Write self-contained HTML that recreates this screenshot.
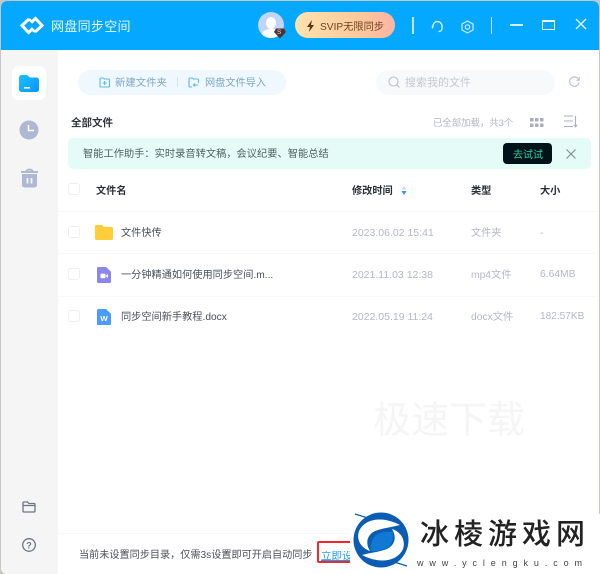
<!DOCTYPE html>
<html lang="zh">
<head>
<meta charset="utf-8">
<style>
html,body{margin:0;padding:0;width:600px;height:574px;overflow:hidden;background:#c9c7c3}
*{box-sizing:border-box}
body{font-family:"Liberation Sans","Noto Sans CJK SC",sans-serif;position:relative}
.a{position:absolute;white-space:nowrap;line-height:1}
svg{position:absolute;overflow:visible}
.cb{position:absolute;width:12px;height:12px;border:1px solid #eceef2;border-radius:3px;background:#fff;left:68px}
.row{position:absolute;left:58px;width:540px;height:1px;background:#f8f8f9}
.g{color:#b4b8c2;font-size:10.5px}
.n{color:#4a4f5a;font-size:10.2px}
.h{color:#2b2f36;font-size:10.2px;font-weight:700}
</style>
</head>
<body>
<div class="a" style="left:1px;top:1px;width:598px;height:573px;background:#fff;border-radius:6px 6px 0 6px;overflow:hidden">
  <div class="a" style="left:0;top:0;width:598px;height:49px;background:#05a8ff"></div>
  <div class="a" style="left:0;top:49px;width:57px;height:524px;background:#f5f5f5"></div>
</div>

<!-- logo -->
<svg style="left:20px;top:16px" width="24" height="20" viewBox="0 0 24 20" fill="none" stroke="#fff" stroke-width="3">
  <path d="M12 13.500L8.500 16.500L2 9.500L9 3"/>
  <path d="M12 5.500L15.500 2.500L22 9.500L15 16"/>
  <path d="M9 3L13 7M15 16L11 12" stroke-width="2.500"/>
</svg>
<div class="a" style="left:51px;top:20px;font-size:13px;color:#e9f7ff;letter-spacing:.3px">网盘同步空间</div>

<!-- avatar -->
<div class="a" style="left:258px;top:12px;width:26px;height:26px;border-radius:50%;background:#c3d4fb;overflow:hidden">
  <div class="a" style="left:8px;top:5px;width:10px;height:12px;border-radius:50%;background:#fff"></div>
  <div class="a" style="left:3px;top:17px;width:20px;height:14px;border-radius:50%;background:#fff"></div>
</div>
<svg style="left:274px;top:28px" width="12" height="11" viewBox="0 0 12 11"><path d="M2 0.500H10L12 4L6 10.500L0 4Z" fill="#4d3230"/></svg>
<div class="a" style="left:277px;top:30px;font-size:6.500px;color:#f3dcc8">S</div>

<!-- SVIP -->
<div class="a" style="left:295px;top:12px;width:100px;height:26px;border-radius:13px;background:linear-gradient(90deg,#fde3ae,#fdc89c 65%,#fdb4a4)"></div>
<svg style="left:306px;top:20px" width="9" height="12" viewBox="0 0 9 12"><path d="M6 0L1 7H4L3 12L8 5H5Z" fill="#5a3514"/></svg>
<div class="a" style="left:320px;top:23px;font-size:10.200px;color:#6b4520">SVIP无限同步</div>

<!-- header right -->
<div class="a" style="left:412px;top:17px;width:2px;height:17px;background:#bfe7ff"></div>
<svg style="left:431px;top:20px" width="13" height="13" viewBox="0 0 13 13" fill="none" stroke="#cdeeff" stroke-width="1.400"><path d="M2 7V6a4.500 4.500 0 0 1 9 0v1"/><path d="M1.500 5.500v3M11 5.500v3"/><path d="M11 8.500c0 2-1.500 3-3.500 3"/></svg>
<svg style="left:461px;top:20px" width="13" height="14" viewBox="0 0 13 14" fill="none" stroke="#cdeeff" stroke-width="1.200"><path d="M6.500 1L12 4V10L6.500 13L1 10V4Z"/><circle cx="6.500" cy="7" r="2.200"/></svg>
<div class="a" style="left:491px;top:17px;width:1px;height:17px;background:#bfe7ff"></div>
<div class="a" style="left:510px;top:24px;width:13px;height:2px;background:#d5f0ff"></div>
<div class="a" style="left:542px;top:20px;width:13px;height:10px;border:1.500px solid #e8f7ff;border-top-width:2.500px"></div>
<svg style="left:575px;top:18px" width="12" height="12" viewBox="0 0 12 12" stroke="#e8f7ff" stroke-width="1.400"><path d="M1 1L11 11M11 1L1 11"/></svg>

<!-- sidebar -->
<div class="a" style="left:12px;top:66px;width:34px;height:34px;border-radius:7px;background:#fff"></div>
<svg style="left:19px;top:74px" width="21" height="19" viewBox="0 0 21 19">
  <defs><linearGradient id="f" x1="0" y1="0" x2="1" y2="1"><stop offset="0" stop-color="#1bc0ff"/><stop offset="1" stop-color="#0a94fb"/></linearGradient></defs>
  <path d="M2.500 1H8L11 3.500H17.500A2.500 2.500 0 0 1 20 6V15.500A2.500 2.500 0 0 1 17.500 18H2.500A2.500 2.500 0 0 1 0 15.500V3.500A2.500 2.500 0 0 1 2.500 1Z" fill="url(#f)"/>
  <rect x="5" y="13" width="6" height="1.600" fill="#e8f7ff"/>
</svg>
<svg style="left:19px;top:120px" width="20" height="20" viewBox="0 0 20 20"><circle cx="10" cy="10" r="9.500" fill="#aeb8d2"/><path d="M9.500 5V10.500H15" fill="none" stroke="#fff" stroke-width="1.500"/></svg>
<svg style="left:20px;top:168px" width="19" height="20" viewBox="0 0 19 20">
  <path d="M1 4H18" stroke="#aeb8d2" stroke-width="2"/><path d="M6 3Q9.500 0 13 3" stroke="#aeb8d2" stroke-width="2" fill="none"/>
  <path d="M2 6H17V17A2.500 2.500 0 0 1 14.500 19.500H4.500A2.500 2.500 0 0 1 2 17Z" fill="#aeb8d2"/>
  <path d="M7.500 10V15.500M11.500 10V15.500" stroke="#f5f5f5" stroke-width="1.800"/>
</svg>
<svg style="left:22px;top:501px" width="14" height="12" viewBox="0 0 14 12" fill="none" stroke="#6e7585" stroke-width="1.300"><path d="M1 2Q1 1 2 1H5.500L7 2.500H12Q13 2.500 13 3.500V10Q13 11 12 11H2Q1 11 1 10Z"/><path d="M1 4.500H13"/></svg>
<svg style="left:22px;top:538px" width="14" height="14" viewBox="0 0 14 14" fill="none"><circle cx="7" cy="7" r="6.300" stroke="#6e7585" stroke-width="1.300"/><text x="7" y="10.300" font-size="9" font-weight="700" text-anchor="middle" fill="#6e7585" font-family="Liberation Sans">?</text></svg>

<!-- toolbar -->
<div class="a" style="left:78px;top:70px;width:208px;height:25px;border-radius:13px;background:#f0f8ff"></div>
<svg style="left:99px;top:77px" width="11" height="11" viewBox="0 0 11 11" fill="none" stroke="#5cb8f7" stroke-width="1.100"><path d="M1 2Q1 1 2 1H4.500L5.500 2H9.500Q10.500 2 10.500 3V9Q10.500 10 9.500 10H2Q1 10 1 9Z"/><path d="M5.700 4V8M3.700 6H7.700"/></svg>
<div class="a" style="left:115px;top:79px;font-size:10.400px;color:#7fa7c6">新建文件夹</div>
<div class="a" style="left:177px;top:77px;width:1px;height:10px;background:#cfe6f8"></div>
<svg style="left:188px;top:77px" width="11" height="11" viewBox="0 0 11 11" fill="none" stroke="#5cb8f7" stroke-width="1.100"><path d="M4 10H2Q1 10 1 9V2Q1 1 2 1H4.500L5.500 2H9.500Q10.500 2 10.500 3V6"/><path d="M10 8H5.500M7 6.500L5.500 8L7 9.500"/></svg>
<div class="a" style="left:205px;top:79px;font-size:10.200px;color:#7fa7c6">网盘文件导入</div>

<div class="a" style="left:376px;top:70px;width:179px;height:25px;border-radius:13px;background:#f8f9fb"></div>
<svg style="left:388px;top:76px" width="12" height="12" viewBox="0 0 12 12" fill="none" stroke="#bcc1cd" stroke-width="1.100"><circle cx="5.500" cy="5.500" r="4.500"/><path d="M9 9L11.500 11.500"/></svg>
<div class="a" style="left:405px;top:78px;font-size:11px;color:#c4c8d1">搜索我的文件</div>
<svg style="left:569px;top:76px" width="11" height="11" viewBox="0 0 11 11" fill="none" stroke="#b9c0d0" stroke-width="1.200"><path d="M9.800 4A4.700 4.700 0 1 0 10 6.500"/><path d="M10.300 1V4.200H7.300" stroke-width="1"/></svg>

<!-- title row -->
<div class="a h" style="left:71px;top:118px;color:#30343b;font-size:10.500px">全部文件</div>
<div class="a" style="left:433px;top:118px;font-size:9.400px;color:#b3b6bc">已全部加载，共3个</div>
<svg style="left:530px;top:118px" width="14" height="10" viewBox="0 0 14 10" fill="#a9afc0"><rect x="0" y="0" width="3.500" height="3.500"/><rect x="5" y="0" width="3.500" height="3.500"/><rect x="10" y="0" width="3.500" height="3.500"/><rect x="0" y="5.500" width="3.500" height="3.500"/><rect x="5" y="5.500" width="3.500" height="3.500"/><rect x="10" y="5.500" width="3.500" height="3.500"/></svg>
<svg style="left:564px;top:115px" width="14" height="13" viewBox="0 0 14 13" fill="none" stroke="#a9afc0" stroke-width="1.100"><path d="M0 1H9M0 6H9M0 11.500H9"/><path d="M11.500 1V11.500M9.800 9.800L11.500 11.800L13.200 9.800"/></svg>

<!-- banner -->
<div class="a" style="left:68px;top:138px;width:523px;height:31px;border-radius:5px;background:#e4fbf8"></div>
<div class="a" style="left:83px;top:150px;font-size:10.200px;color:#4f6360;letter-spacing:.05px">智能工作助手：实时录音转文稿，会议纪要、智能总结</div>
<div class="a" style="left:503px;top:143px;width:49px;height:21px;border-radius:4px;background:#021219"></div>
<div class="a" style="left:513px;top:151px;font-size:10px;color:#27d4a4">去试试</div>
<svg style="left:566px;top:149px" width="10" height="10" viewBox="0 0 10 10" stroke="#7f8d8e" stroke-width="1.100"><path d="M.5 .5L9.500 9.500M9.500 .5L.5 9.500"/></svg>

<!-- table header -->
<div class="cb" style="top:183px"></div>
<div class="a h" style="left:96px;top:187px">文件名</div>
<div class="a h" style="left:352px;top:187px">修改时间</div>
<svg style="left:401px;top:186px" width="6" height="9" viewBox="0 0 6 9"><path d="M3 0L5.500 3.500H.5Z" fill="#d6dae3"/><path d="M3 9L5.500 5H.5Z" fill="#1f9dfa"/></svg>
<div class="a h" style="left:471px;top:187px">类型</div>
<div class="a h" style="left:540px;top:187px">大小</div>
<div class="row" style="top:211px"></div>

<!-- row 1 -->
<div class="cb" style="top:226px"></div>
<svg style="left:95px;top:225px" width="18" height="15" viewBox="0 0 18 15"><path d="M1.500 0H7L9 2H16.500Q18 2 18 3.500V13.500Q18 15 16.500 15H1.500Q0 15 0 13.500V1.500Q0 0 1.500 0Z" fill="#ffcd38"/></svg>
<div class="a n" style="left:121px;top:229px">文件快传</div>
<div class="a g" style="left:352px;top:228px">2023.06.02 15:41</div>
<div class="a g" style="left:471px;top:229px;font-size:10.200px">文件夹</div>
<div class="a g" style="left:540px;top:228px">-</div>
<div class="row" style="top:253px"></div>

<!-- row 2 -->
<div class="cb" style="top:268px"></div>
<svg style="left:97px;top:267px" width="14" height="16" viewBox="0 0 14 17" preserveAspectRatio="none"><path d="M1.500 0H9L14 5V15.500Q14 17 12.500 17H1.500Q0 17 0 15.500V1.500Q0 0 1.500 0Z" fill="#8b85ee"/><rect x="3.500" y="7" width="5" height="5" rx="1" fill="#fff"/><path d="M9 9L11 7.500V11.500L9 10Z" fill="#fff"/></svg>
<div class="a n" style="left:121px;top:271px">一分钟精通如何使用同步空间.m...</div>
<div class="a g" style="left:352px;top:270px">2021.11.03 12:38</div>
<div class="a g" style="left:471px;top:271px;font-size:10.300px">mp4文件</div>
<div class="a g" style="left:540px;top:270px;font-size:10.300px">6.64MB</div>
<div class="row" style="top:296px"></div>

<!-- row 3 -->
<div class="cb" style="top:310px"></div>
<svg style="left:97px;top:309px" width="14" height="16" viewBox="0 0 14 17" preserveAspectRatio="none"><path d="M1.500 0H9L14 5V15.500Q14 17 12.500 17H1.500Q0 17 0 15.500V1.500Q0 0 1.500 0Z" fill="#4b9bf8"/><text x="7" y="13" font-size="8" font-weight="700" text-anchor="middle" fill="#fff" font-family="Liberation Sans">W</text></svg>
<div class="a n" style="left:121px;top:313px">同步空间新手教程.docx</div>
<div class="a g" style="left:352px;top:312px">2022.05.19 11:24</div>
<div class="a g" style="left:471px;top:313px;font-size:10.300px">docx文件</div>
<div class="a g" style="left:540px;top:312px;font-size:10.100px">182.57KB</div>

<!-- watermark -->
<div class="a" style="left:373px;top:398px;font-size:38px;color:#f5f5f6;font-family:'Noto Sans CJK SC',sans-serif">极速下载</div>

<!-- footer -->
<div class="a" style="left:58px;top:533px;width:540px;height:1px;background:#f6f6f7"></div>
<div class="a" style="left:79px;top:551px;font-size:10.150px;color:#4c5058">当前未设置同步目录，仅需3s设置即可开启自动同步</div>
<div class="a" style="left:321px;top:551px;font-size:10.500px;color:#1c9bf5;text-decoration:underline;width:30px;overflow:hidden">立即设置</div>
<div class="a" style="left:317px;top:541px;width:40px;height:22px;border:2.500px solid #f2262c;border-radius:2px"></div>

<!-- site watermark logo -->
<div class="a" style="left:350px;top:514px;width:250px;height:60px;background:#fff"></div>
<svg style="left:353px;top:512px" width="58" height="58" viewBox="0 0 58 58">
  <circle cx="28" cy="28" r="27.500" fill="#0b5db3"/>
  <path d="M47 13C30 4 12 6 6 19C3 28 8 36 17 39C12 31 14 23 22 19C30 16 40 15 47 13Z" fill="#fff"/>
  <path d="M47 13C30 4 12 6 6 19C3 28 8 36 17 39C12 31 14 23 22 19C30 16 40 15 47 13Z" fill="#fff" transform="rotate(180 28 28)"/>
  <path d="M2 2L18 7M54 54L38 49" stroke="#0b5db3" stroke-width="1.200"/>
  <path d="M23 23Q30 19 40 20Q41 29 36 35Q28 40 18 39Q17 29 23 23Z" fill="#1178d4"/>
</svg>
<div class="a" style="left:420px;top:518px;font-size:29px;letter-spacing:5px;color:#222;font-family:'Noto Sans CJK SC',sans-serif;font-weight:500">冰棱游戏网</div>
<div class="a" style="left:417px;top:559px;font-size:9px;letter-spacing:5.900px;color:#444;font-family:'Liberation Sans',sans-serif">www.yclengku.com</div>
</body>
</html>
